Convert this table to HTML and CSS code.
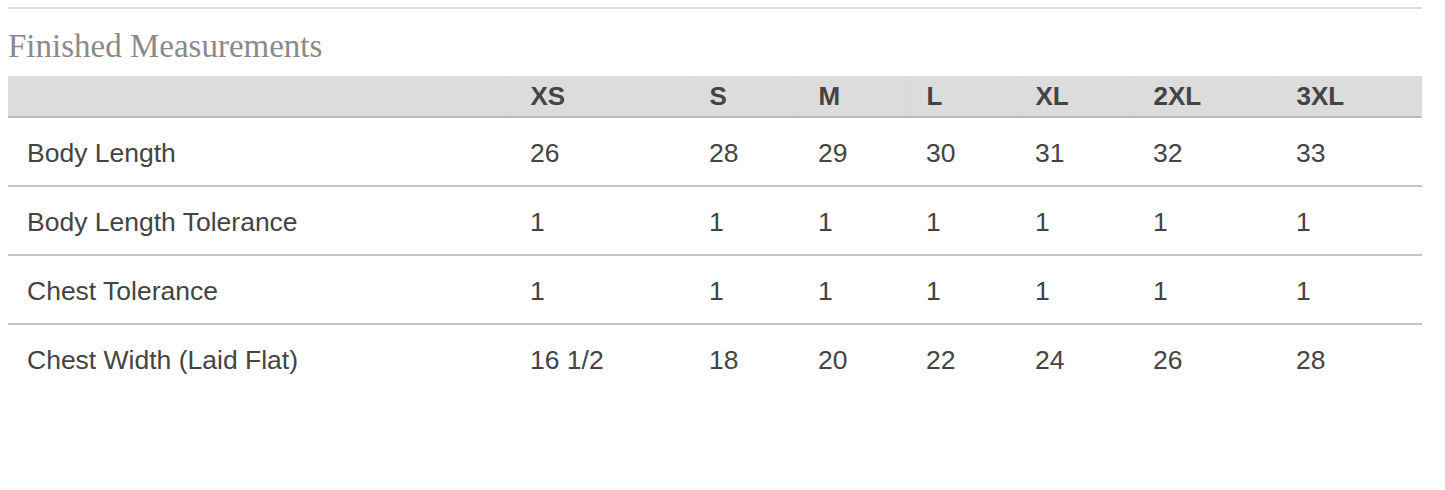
FILE: index.html
```html
<!DOCTYPE html>
<html>
<head>
<meta charset="utf-8">
<link rel="stylesheet" href="styles.css">
</head>
<body>
<div class="page">
  <h2 class="title">Finished Measurements</h2>
  <table class="sizes">
    <colgroup>
      <col class="c0"><col class="c1"><col class="c2"><col class="c3"><col class="c4"><col class="c5"><col class="c6"><col class="c7">
    </colgroup>
    <thead>
      <tr><th></th><th>XS</th><th>S</th><th>M</th><th>L</th><th>XL</th><th>2XL</th><th>3XL</th></tr>
    </thead>
    <tbody>
      <tr><td>Body Length</td><td>26</td><td>28</td><td>29</td><td>30</td><td>31</td><td>32</td><td>33</td></tr>
      <tr><td>Body Length Tolerance</td><td>1</td><td>1</td><td>1</td><td>1</td><td>1</td><td>1</td><td>1</td></tr>
      <tr><td>Chest Tolerance</td><td>1</td><td>1</td><td>1</td><td>1</td><td>1</td><td>1</td><td>1</td></tr>
      <tr><td>Chest Width (Laid Flat)</td><td>16 1/2</td><td>18</td><td>20</td><td>22</td><td>24</td><td>26</td><td>28</td></tr>
    </tbody>
  </table>
</div>
</body>
</html>
```
FILE: styles.css
```css
html, body { margin: 0; padding: 0; background: #fff; }
.page {
  margin: 7px 23px 0 8px;
  border-top: 2px solid #dedede;
}
.title {
  margin: 0;
  padding: 19px 0 12px 0;
  font-family: "Liberation Serif", serif;
  font-weight: normal;
  font-size: 33px;
  line-height: 36px;
  color: #8a8a8a;
}
.sizes {
  width: 100%;
  border-collapse: collapse;
  table-layout: fixed;
  font-family: "Liberation Sans", Arial, sans-serif;
  font-size: 26.5px;
  color: #444;
}
.c0 { width: 503px; }
.c1 { width: 179px; }
.c2 { width: 109px; }
.c3 { width: 108px; }
.c4 { width: 109px; }
.c5 { width: 118px; }
.c6 { width: 143px; }
.c7 { width: 145px; }
.sizes th {
  background: #dcdcdc;
  height: 40px;
  padding: 0 0 0 19px;
  text-align: left;
  font-weight: bold;
  font-size: 26px;
  border-bottom: 2px solid #b9b9b9;
  border-left: 1px solid #d8d8d8;
}
.sizes th:first-child { border-left: none; }
.sizes td {
  height: 64px;
  padding: 3px 0 0 19px;
  text-align: left;
  border-bottom: 2px solid #c4c4c4;
}
.sizes tbody tr:last-child td { border-bottom: none; }
```
